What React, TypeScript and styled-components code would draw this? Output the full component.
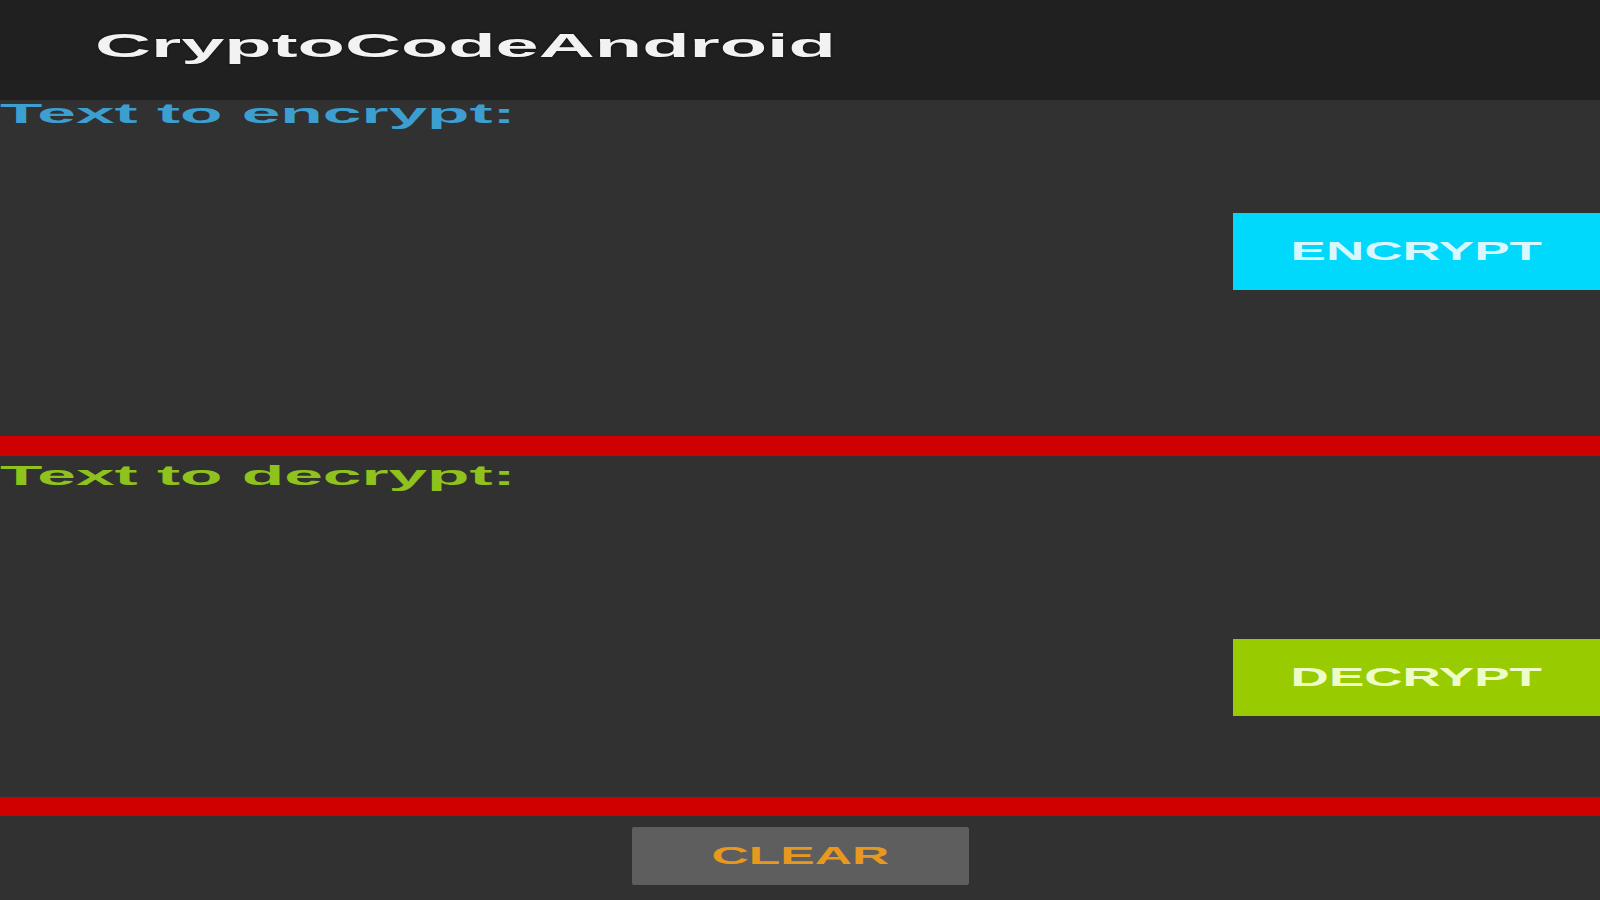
import * as React from "react";
import styled, { createGlobalStyle } from "styled-components";

const GlobalStyle = createGlobalStyle`
  html, body {
    margin: 0;
    padding: 0;
    background: #313131;
    overflow: hidden;
  }
  * {
    box-sizing: border-box;
  }
`;

const Screen = styled.div`
  width: 1600px;
  height: 900px;
  display: flex;
  flex-direction: column;
  background: #313131;
  font-family: "Liberation Sans", Arial, sans-serif;
`;

const ActionBar = styled.header`
  height: 100px;
  flex: none;
  display: flex;
  align-items: flex-start;
  padding: 29px 0 0 95px;
  background: #202020;
`;

// the capture is stretched sideways, so text is widened with scaleX
const Stretch = styled.span<{ $scale: number; $origin?: string }>`
  display: inline-block;
  white-space: nowrap;
  transform: scaleX(${(p) => p.$scale});
  transform-origin: ${(p) => p.$origin || "left"} center;
`;

const Title = styled.h1`
  margin: 0;
  font-size: 33px;
  line-height: 33px;
  font-weight: 700;
  color: #f2f2f2;
  text-shadow: 0 0 2px rgba(0, 0, 0, 0.6);
`;

const Section = styled.section<{ $height: number; $top: number }>`
  height: ${(p) => p.$height}px;
  flex: none;
  display: flex;
  flex-direction: column;
  padding-top: ${(p) => p.$top}px;
`;

const Label = styled.div<{ $color: string }>`
  font-size: 28px;
  line-height: 28px;
  font-weight: 700;
  color: ${(p) => p.$color};
`;

const ButtonRow = styled.div<{ $gap: number }>`
  display: flex;
  justify-content: flex-end;
  margin-top: ${(p) => p.$gap}px;
`;

const ActionButton = styled.button<{ $bg: string; $fg: string }>`
  width: 367px;
  height: 77px;
  border: none;
  border-radius: 0;
  padding: 0;
  display: flex;
  align-items: center;
  justify-content: center;
  background: ${(p) => p.$bg};
  color: ${(p) => p.$fg};
  font-family: inherit;
  font-size: 25px;
  line-height: 25px;
  font-weight: 700;
`;

const Divider = styled.div<{ $height: number }>`
  height: ${(p) => p.$height}px;
  flex: none;
  background: #cf0000;
`;

const Footer = styled.footer`
  flex: 1;
  display: flex;
  justify-content: center;
  padding-top: 11px;
`;

const ClearButton = styled.button`
  width: 337px;
  height: 58px;
  border: none;
  border-radius: 2px;
  padding: 0;
  display: flex;
  align-items: center;
  justify-content: center;
  background: #5e5e5e;
  color: #e8981f;
  font-family: inherit;
  font-size: 24px;
  line-height: 24px;
  font-weight: 700;
`;

export default function App() {
  return (
    <Screen>
      <GlobalStyle />
      <ActionBar>
        <Title>
          <Stretch $scale={2.35}>CryptoCodeAndroid</Stretch>
        </Title>
      </ActionBar>

      <Section $height={336} $top={0}>
        <Label $color="#3c9fcf">
          <Stretch $scale={2.48}>Text to encrypt:</Stretch>
        </Label>
        <ButtonRow $gap={85}>
          <ActionButton $bg="#00d9fc" $fg="#d8f7ff">
            <Stretch $scale={2.12} $origin="center">ENCRYPT</Stretch>
          </ActionButton>
        </ButtonRow>
      </Section>

      <Divider $height={20} />

      <Section $height={341} $top={6}>
        <Label $color="#8fc21c">
          <Stretch $scale={2.48}>Text to decrypt:</Stretch>
        </Label>
        <ButtonRow $gap={149}>
          <ActionButton $bg="#99cc00" $fg="#eefcc8">
            <Stretch $scale={2.12} $origin="center">DECRYPT</Stretch>
          </ActionButton>
        </ButtonRow>
      </Section>

      <Divider $height={19} />

      <Footer>
        <ClearButton>
          <Stretch $scale={2.15} $origin="center">CLEAR</Stretch>
        </ClearButton>
      </Footer>
    </Screen>
  );
}
